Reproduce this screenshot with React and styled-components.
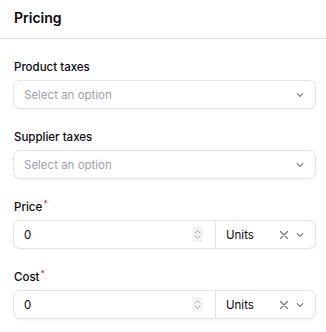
import React from "react";
import styled, { createGlobalStyle } from "styled-components";

const GlobalStyle = createGlobalStyle`
	html, body {
		margin: 0;
		padding: 0;
		background: #ffffff;
	}
	body {
		font-family: Inter, "Noto Sans", sans-serif;
		color: #18181b;
	}
`;

const Panel = styled.div`
	width: 326px;
	height: 332px;
	background: #ffffff;
	overflow: hidden;
`;

const Header = styled.div`
	height: 39px;
	box-sizing: border-box;
	display: flex;
	align-items: center;
	padding: 0 14px 4px;
	border-bottom: 1px solid #e4e4e7;
	font-size: 14px;
	font-weight: 600;
	color: #09090b;
`;

const Body = styled.div`
	display: flex;
	flex-direction: column;
	gap: 20px;
	padding: 20px 10px 0 13px;
`;

const Field = styled.div`
	display: flex;
	flex-direction: column;
	gap: 5px;
`;

const Label = styled.label`
	font-size: 11.5px;
	font-weight: 500;
	line-height: 16px;
	padding-left: 1px;
	color: #09090b;

	sup {
		color: #ef4444;
		font-size: 8px;
		font-weight: 700;
		margin-left: 1px;
		vertical-align: 5px;
		line-height: 0;
	}
`;

const Box = styled.div`
	height: 27px;
	display: flex;
	align-items: center;
	border: 1px solid #e4e4e7;
	border-radius: 7px;
	box-shadow: 0 1px 2px rgba(0, 0, 0, 0.05);
	background: #ffffff;
	font-size: 11.5px;
`;

const Placeholder = styled.span`
	flex: 1;
	padding-left: 10px;
	color: #a1a1aa;
`;

const Value = styled.span`
	flex: 1;
	padding-left: 10px;
	color: #09090b;
`;

const Icon = styled.span`
	display: flex;
	align-items: center;
	justify-content: center;
	color: #71717a;
	margin-right: ${(p) => p.mr || 0}px;
`;

const Spinner = styled.span`
	width: 11px;
	height: 15px;
	border-radius: 2px;
	background: #f4f4f5;
	display: flex;
	align-items: center;
	justify-content: center;
	margin-right: 12px;
`;

const Unit = styled.div`
	width: 100px;
	height: 100%;
	border-left: 1px solid #e4e4e7;
	display: flex;
	align-items: center;
	padding-left: 10px;
	box-sizing: border-box;
`;

const UnitText = styled.span`
	flex: 1;
	color: #09090b;
`;

const Chevron = () => (
	<svg width="10" height="10" viewBox="0 0 10 10" fill="none">
		<path d="M2.2 3.7 L5 6.4 L7.8 3.7" stroke="#71717a" strokeWidth="1.1" strokeLinecap="round" strokeLinejoin="round" />
	</svg>
);

const Cross = () => (
	<svg width="10" height="10" viewBox="0 0 10 10" fill="none">
		<path d="M1.5 1.5 L8.5 8.5 M8.5 1.5 L1.5 8.5" stroke="#71717a" strokeWidth="1.1" strokeLinecap="round" />
	</svg>
);

const Updown = () => (
	<svg width="7" height="11" viewBox="0 0 7 11" fill="none">
		<path d="M1 4 L3.5 1.5 L6 4 M1 7 L3.5 9.5 L6 7" stroke="#a1a1aa" strokeWidth="0.9" strokeLinecap="round" strokeLinejoin="round" />
	</svg>
);

function SelectField({ label }) {
	return (
		<Field>
			<Label>{label}</Label>
			<Box>
				<Placeholder>Select an option</Placeholder>
				<Icon mr={10}>
					<Chevron />
				</Icon>
			</Box>
		</Field>
	);
}

function AmountField({ label }) {
	return (
		<Field>
			<Label>
				{label}
				<sup>*</sup>
			</Label>
			<Box>
				<Value>0</Value>
				<Spinner>
					<Updown />
				</Spinner>
				<Unit>
					<UnitText>Units</UnitText>
					<Icon mr={6}>
						<Cross />
					</Icon>
					<Icon mr={10}>
						<Chevron />
					</Icon>
				</Unit>
			</Box>
		</Field>
	);
}

export default function App() {
	return (
		<>
			<GlobalStyle />
			<Panel>
				<Header>Pricing</Header>
				<Body>
					<SelectField label="Product taxes" />
					<SelectField label="Supplier taxes" />
					<AmountField label="Price" />
					<AmountField label="Cost" />
				</Body>
			</Panel>
		</>
	);
}
